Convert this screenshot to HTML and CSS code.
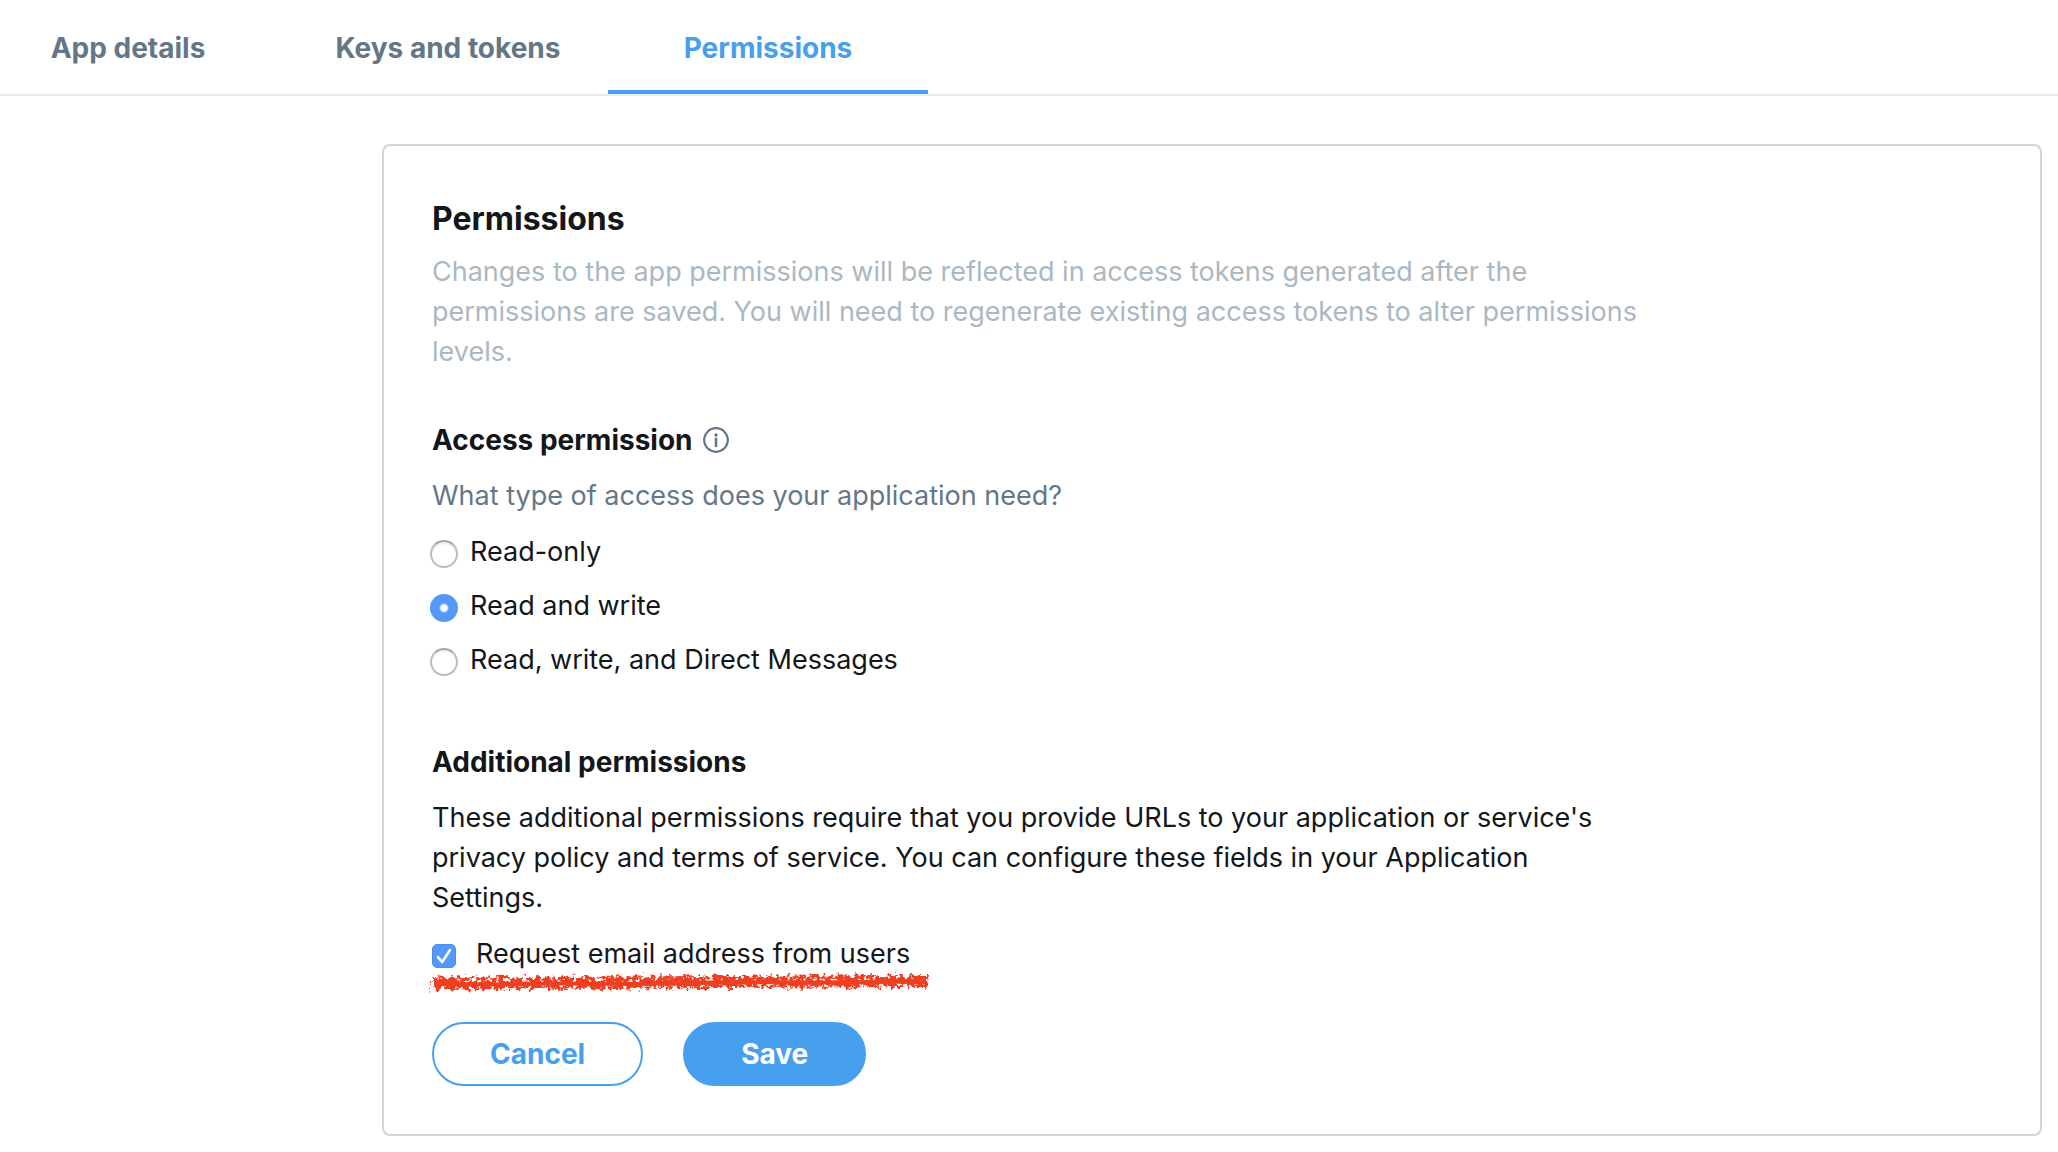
FILE: index.html
```
<!DOCTYPE html>
<html lang="en">
<head>
    <meta charset="UTF-8">
    <title>Permissions</title>
    <link rel="stylesheet" href="styles.css">
</head>
<body>
    <nav class="tabs">
        <a class="tab" href="#details">App details</a>
        <a class="tab" href="#keys">Keys and tokens</a>
        <a class="tab active" href="#permissions">Permissions</a>
    </nav>

    <main class="content">
        <form class="card">
            <h1 class="title">Permissions</h1>
            <p class="text text-light">Changes to the app permissions will be reflected in access tokens generated after the permissions are saved. You will need to regenerate existing access tokens to alter permissions levels.</p>

            <section class="access">
                <h2 class="subtitle">
                    Access permission
                    <svg class="info" viewBox="0 0 26 26" aria-hidden="true">
                        <circle cx="13" cy="13" r="11.8" fill="none" stroke="#657786" stroke-width="2.2"/>
                        <circle cx="13" cy="8" r="1.7" fill="#657786"/>
                        <path d="M13 11.8V19" stroke="#657786" stroke-width="2.6" stroke-linecap="round"/>
                    </svg>
                </h2>
                <p class="text text-gray" id="access-question">What type of access does your application need?</p>
                <div class="options" role="radiogroup" aria-labelledby="access-question">
                    <label class="option"><input class="radio" type="radio" name="access">Read-only</label>
                    <label class="option"><input class="radio" type="radio" name="access" checked>Read and write</label>
                    <label class="option"><input class="radio" type="radio" name="access">Read, write, and Direct Messages</label>
                </div>
            </section>

            <section class="additional">
                <h2 class="subtitle">Additional permissions</h2>
                <p class="text">These additional permissions require that you provide URLs to your application or service's privacy policy and terms of service. You can configure these fields in your Application Settings.</p>
                <label class="check">
                    <span class="check-box">
                        <input class="checkbox" type="checkbox" checked>
                        <svg class="tick" viewBox="0 0 24 24" aria-hidden="true">
                            <path d="M6 13.2L10.2 18L18 6" fill="none" stroke="#fff" stroke-width="2.6" stroke-linecap="round" stroke-linejoin="round"/>
                        </svg>
                    </span>
                    Request email address from users
                </label>
                <!-- crayon underline -->
                <svg class="crayon" viewBox="0 0 496 16" aria-hidden="true">
                    <filter id="rough" filterUnits="userSpaceOnUse" x="-10" y="-10" width="516" height="36" color-interpolation-filters="sRGB">
                        <feTurbulence type="fractalNoise" baseFrequency="0.22" numOctaves="3" seed="4" result="noise"/>
                        <feDisplacementMap in="SourceGraphic" in2="noise" scale="12" xChannelSelector="R" yChannelSelector="G" result="edge"/>
                        <feColorMatrix in="noise" type="matrix" values="0 0 0 0 0  0 0 0 0 0  0 0 0 0 0  0 0 9 0 -2.9" result="grain"/>
                        <feComposite in="edge" in2="grain" operator="in"/>
                    </filter>
                    <g fill="none" stroke="#ee3f23" filter="url(#rough)">
                        <path d="M0 9.5L496 7" stroke-width="12"/>
                    </g>
                    <path d="M2 10L60 10.5L130 9.5L210 10L300 8L380 8.5L494 7.5" fill="none" stroke="#ee3f23" stroke-width="4"/>
                </svg>
            </section>

            <div class="actions">
                <button class="btn btn-outline" type="button">Cancel</button>
                <button class="btn btn-primary" type="submit">Save</button>
            </div>
        </form>
    </main>
</body>
</html>
```
FILE: styles.css
```
* {
    box-sizing: border-box;
}
body {
    margin: 0;
    background: #fff;
    color: #14171a;
    font-family: Inter, "Liberation Sans", sans-serif;
    font-size: 27px;
    line-height: 40px;
}
h1, h2, p {
    margin: 0;
}
.tabs {
    display: flex;
    height: 96px;
    padding-right: 32px;
    border-bottom: 2px solid #e6ecf0;
    overflow: hidden;
}
.tab {
    display: flex;
    align-items: center;
    justify-content: center;
    flex: 0 0 320px;
    border-bottom: 4px solid transparent;
    padding-top: 6px;
    color: #657786;
    font-size: 28px;
    font-weight: 700;
    text-decoration: none;
}
.tab:first-child {
    margin-left: -32px;
}
.tab.active {
    color: #47a0ed;
    border-bottom-color: #47a0ed;
}
.content {
    padding: 48px 16px 16px 382px;
}
.card {
    padding: 48px;
    border: 2px solid #ccd6dd;
    border-radius: 8px;
}
.title {
    margin-bottom: 8px;
    font-size: 32px;
    line-height: 50px;
    font-weight: 700;
}
.text {
    max-width: 1208px;
}
.text-light { color: #aab8c2; }
.text-gray { color: #657786; }
.access {
    margin-top: 48px;
}
.additional {
    margin-top: 62px;
}
.subtitle {
    display: flex;
    align-items: center;
    gap: 10px;
    margin-bottom: 16px;
    font-size: 28px;
    font-weight: 700;
}
.info {
    width: 26px;
    height: 26px;
}
.options {
    display: flex;
    flex-direction: column;
    align-items: flex-start;
    gap: 14px;
    margin-top: 16px;
}
.option {
    display: flex;
    align-items: center;
    gap: 12px;
    margin-left: -2px;
}
.radio {
    appearance: none;
    width: 28px;
    height: 28px;
    margin: 4px 0 0;
    border: 2px solid #bdbdbd;
    border-top-color: #a8a8a8;
    border-radius: 50%;
    background: #fff;
    box-shadow: inset 0 2px 2px #eee;
}
.radio:checked {
    border: none;
    background: radial-gradient(circle, #fff 3px, #5499f7 5px);
    box-shadow: none;
}
.check {
    display: flex;
    align-items: center;
    gap: 20px;
    width: fit-content;
    margin-top: 16px;
}
.check-box {
    position: relative;
    width: 24px;
    height: 24px;
    margin-top: 4px;
}
.checkbox {
    appearance: none;
    display: block;
    width: 24px;
    height: 24px;
    margin: 0;
    border: 1px solid #bdbdbd;
    border-radius: 5px;
}
.checkbox:checked {
    border-color: #4a8fee;
    background: #5499f7;
}
.tick {
    position: absolute;
    top: 0;
    left: 0;
    width: 24px;
    height: 24px;
    pointer-events: none;
}
.crayon {
    display: block;
    width: 496px;
    height: 16px;
    overflow: visible;
}
.actions {
    display: flex;
    gap: 40px;
    margin-top: 32px;
}
.btn {
    height: 64px;
    padding: 0 56px;
    border: 2px solid #47a0ed;
    border-radius: 32px;
    font-family: inherit;
    font-size: 28px;
    font-weight: 700;
    cursor: pointer;
}
.btn-outline {
    background: #fff;
    color: #47a0ed;
}
.btn-primary {
    background: #47a0ed;
    color: #fff;
}
```
